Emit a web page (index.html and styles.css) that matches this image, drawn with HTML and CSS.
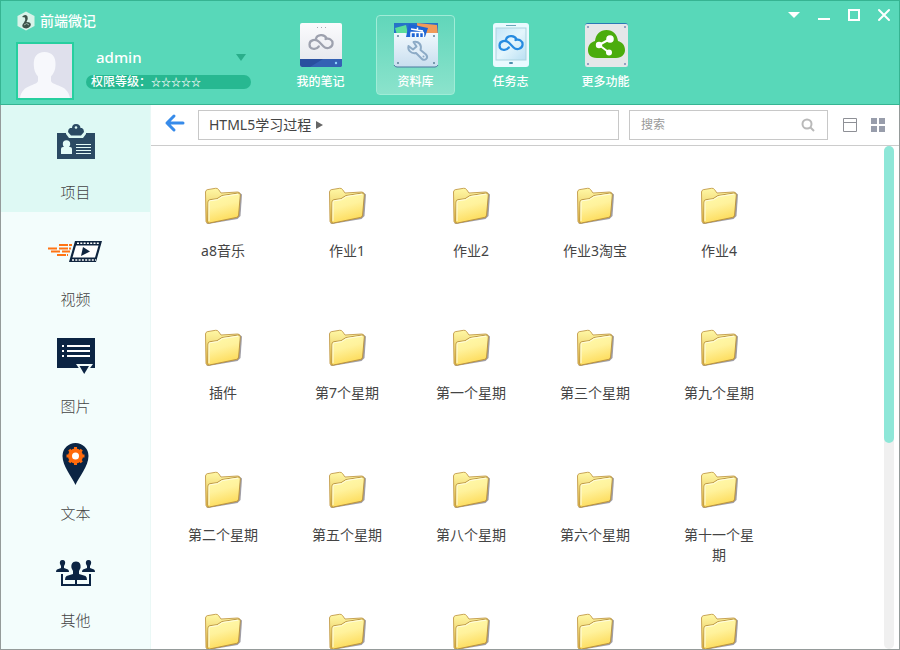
FILE: index.html
```html
<!DOCTYPE html>
<html lang="zh-CN">
<head>
<meta charset="utf-8">
<title>前端微记</title>
<link rel="stylesheet" href="styles.css">
</head>
<body>
<svg class="defs" aria-hidden="true">
  <defs>
    <linearGradient id="front" x1="0" y1="0" x2="0.3" y2="1">
      <stop offset="0" stop-color="#fffcae"/><stop offset="0.5" stop-color="#fff29c"/><stop offset="1" stop-color="#fddc5c"/>
    </linearGradient>
    <linearGradient id="back" x1="0" y1="0" x2="0" y2="1">
      <stop offset="0" stop-color="#fff8a6"/><stop offset="1" stop-color="#e2b53e"/>
    </linearGradient>
    <linearGradient id="steel" x1="0" y1="0" x2="0" y2="1">
      <stop offset="0" stop-color="#fbfbfd"/><stop offset="1" stop-color="#e4e6ec"/>
    </linearGradient>
    <linearGradient id="pocket" x1="0" y1="0" x2="0" y2="1">
      <stop offset="0" stop-color="#f0f8fd"/><stop offset="1" stop-color="#c9deef"/>
    </linearGradient>
    <linearGradient id="screen" x1="0" y1="0" x2="1" y2="1">
      <stop offset="0" stop-color="#c5e6f7"/><stop offset="0.5" stop-color="#e4f6fd"/><stop offset="1" stop-color="#b9dff3"/>
    </linearGradient>
    <symbol id="folder" viewBox="0 0 38 38">
      <path d="M36 6 38 7.500 36.500 29 33.500 32 4 37 2 36z" fill="#77757f" opacity=".7"/>
      <path d="M1.500 5Q1.700 3.200 3.200 2.700L11.500 1.300Q13.400 1 14.500 2.500L17 6 33.500 5Q36 5 35.800 7L34 30 3.500 36.300 2 34.500z" fill="url(#back)" stroke="#c29a48" stroke-width=".9"/>
      <path d="M4 14.800Q4 13.100 5.800 12.700L13 11.700 18 8.500 34 6Q36.500 5.800 36.300 8L34.600 28Q34.400 30 32.500 30.400L5.500 36Q3.700 36.300 3.700 34.500z" fill="url(#front)" stroke="#b58f40" stroke-width=".9"/>
      <path d="M5 34V15.500Q5 14 6.500 13.700L13.500 12.700 18.500 9.500 34 7.200" fill="none" stroke="#fffde0" stroke-width="1"/>
    </symbol>
    <symbol id="cloud" viewBox="0 0 26 18">
      <path d="M8 5.500C9 1.800 16 .2 18.500 5.200M17.500 6C21 4.500 24.600 7 24.600 10.200C24.600 15 18.600 16.500 15.600 13.400L11 8.800C7.800 5.500 1.500 6.800 1.500 11.400C1.500 16.200 7.800 17.500 10.800 13.500" fill="none" stroke="currentColor" stroke-width="2.200" stroke-linecap="round"/>
    </symbol>
  </defs>
</svg>
<div class="app">
  <header class="top">
    <div class="account">
      <h1 class="brand">
        <svg width="20" height="20" viewBox="0 0 20 20" aria-hidden="true">
          <path d="M10 .5 18.500 5V15L10 19.500 1.500 15V5z" fill="#d9f3e9"/>
          <path d="M6 6Q9 2.500 11.500 5.500Q12.500 8 10.500 11Q16 11 14.500 15Q12 18.500 8 17Q4.500 15 8 11.500Q10 8.500 9 6.500z" fill="#3d5349"/>
          <path d="M8 14Q11 11 13 14" fill="none" stroke="#9fb8aa"/>
        </svg>
        <span>前端微记</span>
      </h1>
      <div class="profile">
        <svg class="avatar" viewBox="0 0 54 54" role="img" aria-label="头像">
          <rect width="54" height="54" fill="#dfe0ec"/>
          <path d="M26.500 8C34 8 38 13 37.500 21C37.400 26 36 29 33 32.500V37C34 42 50 40 52 54H2C4 40 19 42 20 37V32.500C17 29 16 26 15.800 21C15.500 13 19 8 26.500 8z" fill="#f7f8fc"/>
        </svg>
        <div class="who">
          <button class="user" type="button"><span>admin</span><svg width="10" height="7" viewBox="0 0 10 7" aria-hidden="true"><path d="M0 0H10L5 7z" fill="#2aae8b"/></svg></button>
          <p class="level"><span>权限等级：</span><span class="stars">☆☆☆☆☆</span></p>
        </div>
      </div>
    </div>
    <nav class="tabs">
      <a class="tab" href="#notes">
        <svg width="46" height="46" viewBox="0 0 46 46" aria-hidden="true">
          <rect x="2" y="1" width="42" height="44" rx="2" fill="url(#steel)"/>
          <path d="M2 37H44V43Q44 45 42 45H4Q2 45 2 43z" fill="#294f9f"/><path d="M12 45 25 37H44V43Q44 45 42 45z" fill="#3461b4"/>
          <circle cx="38" cy="41" r="1.200" fill="#8ed5ff"/>
          <path d="M19 5.500H20M23 5.500H24M27 5.500H28" stroke="#a6a8b2" stroke-width="1"/>
          <use href="#cloud" x="10" y="11" width="26" height="18" color="#9da1ae"/>
        </svg>
        <span>我的笔记</span>
      </a>
      <a class="tab current" href="#library" aria-current="page">
        <svg width="46" height="46" viewBox="0 0 46 46" aria-hidden="true">
          <path d="M1 1H45V16H1z" fill="#2673c8"/>
          <path d="M2 6 13 3 15 12 5 16z" fill="#5bdd9c"/><path d="M24 1 44 3 45 14H25z" fill="#f19b58"/>
          <path d="M1 11H12Q15 11 16 14H30Q31 11 34 11H45V42Q45 45 42 45H4Q1 45 1 42z" fill="url(#pocket)"/>
          <path d="M16 2 35 6 32 15H13z" fill="#1d65d5"/>
          <path d="M18 7 30 9M24.500 5.500V8M18 11V15M22.500 11V15M26.500 11V15M30.500 11V15M17.500 10.500H31" stroke="#fff" stroke-width="1.500" fill="none"/>
          <path d="M1 43Q2 45 4 45H42Q44 45 45 43" stroke="#4b789f" fill="none"/>
          <g fill="#5b8097"><circle cx="5" cy="14" r="1"/><circle cx="41" cy="14" r="1"/><circle cx="5" cy="41" r="1"/><circle cx="41" cy="41" r="1"/></g>
          <path d="M20.500 20C26 19 29 23 27.500 28L33 32.500C36 36 31.500 40 28.500 36.500L23 31C18 32 14.500 28 15.500 24L20 27.500 23.500 24.500z" fill="#e1eef8" stroke="#8caac6" stroke-width="2" stroke-linejoin="round"/>
          <circle cx="30.500" cy="34.500" r="1" fill="#8caac6"/>
        </svg>
        <span>资料库</span>
      </a>
      <a class="tab" href="#tasks">
        <svg width="46" height="46" viewBox="0 0 46 46" aria-hidden="true">
          <rect x="5" y="1" width="36" height="44" rx="3" fill="#eafaff"/>
          <rect x="8" y="6" width="30" height="32" fill="url(#screen)" stroke="#abd3df"/>
          <path d="M18 3.500H28" stroke="#6ba6ba"/><rect x="21" y="40" width="4" height="2" rx="1" fill="#4c8fac"/>
          <use href="#cloud" x="10" y="12" width="26" height="18" color="#268be0"/>
        </svg>
        <span>任务志</span>
      </a>
      <a class="tab" href="#more">
        <svg width="46" height="46" viewBox="0 0 46 46" aria-hidden="true">
          <rect x="2" y="1" width="43" height="44" rx="3" fill="#2b78b6"/><rect x="2" y="2" width="43" height="43" rx="2" fill="#e5e7e9"/>
          <g fill="#7888b5"><circle cx="5" cy="5" r="1"/><circle cx="42" cy="5" r="1"/><circle cx="5" cy="42" r="1"/><circle cx="42" cy="42" r="1"/></g>
          <path d="M14 36C7 36 5 32 5 28C5 23 8 20 12 19C13 12 17 8 23.500 8C30 8 34 12 35 19C39 20 42 23 42 28C42 32 39 36 33 36z" fill="#4bac0d"/>
          <path d="M27 17 16 23 26 30.500" fill="none" stroke="#fff" stroke-width="2"/>
          <g fill="#fff"><circle cx="27" cy="17" r="3.800"/><circle cx="16" cy="23" r="3.200"/><circle cx="26" cy="30.500" r="3"/></g>
        </svg>
        <span>更多功能</span>
      </a>
    </nav>
    <div class="window-buttons">
      <button type="button" aria-label="菜单"><svg viewBox="0 0 14 14"><path d="M1 4H13L7 10z" fill="#fff"/></svg></button>
      <button type="button" aria-label="最小化"><svg viewBox="0 0 14 14"><path d="M1 11H13" stroke="#fff" stroke-width="2"/></svg></button>
      <button type="button" aria-label="最大化"><svg viewBox="0 0 14 14"><path d="M2 2H12V12H2z" fill="none" stroke="#fff" stroke-width="2"/></svg></button>
      <button type="button" aria-label="关闭"><svg viewBox="0 0 14 14"><path d="M2 2 12 12M12 2 2 12" stroke="#fff" stroke-width="2" stroke-linecap="round"/></svg></button>
    </div>
  </header>
  <div class="content">
    <nav class="side">
      <a class="kind current" href="#project" aria-current="page">
        <svg viewBox="0 0 56 44" aria-hidden="true">
          <path d="M9 12H47V38H9z" fill="#2b4a63"/>
          <path d="M18 11H38V13L35 17H21L18 13z" fill="#def9f4"/>
          <path d="M28 3C31 3 32.500 5 32.500 7H34Q36 8 36 11L33 14.500H23L20 11Q20 8 22 7H24C24 5 25 3 28 3z" fill="#2b4a63"/>
          <circle cx="28" cy="6.500" r="1.300" fill="#def9f4"/>
          <circle cx="18.500" cy="23" r="3.700" fill="#e4fbf7"/><path d="M13 33V28Q13 26 15 26H22Q24 26 24 28V33z" fill="#e4fbf7"/>
          <path d="M28 23.500H43M28 26.500H43M28 29.500H43M28 32.500H43" stroke="#e4fbf7"/>
        </svg>
        <span>项目</span>
      </a>
      <a class="kind" href="#video">
        <svg viewBox="0 0 56 44" aria-hidden="true">
          <path d="M27 13H54L48 34H21z" fill="#10253f"/>
          <path d="M28 17.500H50.500L47 29.500H24.500z" fill="#fff"/>
          <path d="M29 15.300H52M24 32H48" stroke="#fff" stroke-width="1.500" stroke-dasharray="2 1.300"/>
          <path d="M35 19 42 23.500 33 28z" fill="#10253f"/>
          <path d="M11 17H24M0 20.500H9M11 20.500H23M3 23.500H12M14 23.500H22M9 27H20" stroke="#ff7414" stroke-width="2" stroke-dasharray="9 1"/>
        </svg>
        <span>视频</span>
      </a>
      <a class="kind" href="#picture">
        <svg viewBox="0 0 56 44" aria-hidden="true">
          <path d="M9 3H47V33H9z" fill="#0b2443"/>
          <path d="M14 11H16M14 16H16M14 21H16M19 11H42M19 16H42M19 21H42" stroke="#fff" stroke-width="2"/>
          <path d="M28 29H45L37 40H35.500z" fill="#f3fdfc"/><path d="M31.500 31H41L36.200 39z" fill="#0b2443"/>
        </svg>
        <span>图片</span>
      </a>
      <a class="kind" href="#text">
        <svg viewBox="0 0 56 44" aria-hidden="true">
          <path d="M27.500 43C24 35 14.500 24 14.500 14A13 13 0 0 1 40.500 14C40.500 24 31 35 27.500 43z" fill="#0b2443"/>
          <circle cx="27.500" cy="14" r="7.500" fill="#ff6a0c"/>
          <path d="M27.500 5V23M18.500 14H36.500M21.200 7.700 33.800 20.300M33.800 7.700 21.200 20.300" stroke="#ff6a0c" stroke-width="3"/>
          <circle cx="27.500" cy="14" r="3.500" fill="#fff"/>
        </svg>
        <span>文本</span>
      </a>
      <a class="kind" href="#other">
        <svg viewBox="0 0 56 44" aria-hidden="true">
          <g fill="#0b2443">
            <path d="M14.500 11C17 11 17.500 13 17 15L16 17V19L20 20.500Q21 21 21 23H8Q8 21 9 20.500L13 19V17L12 15C11.500 13 12 11 14.500 11z"/>
            <path d="M40.500 11C43 11 43.500 13 43 15L42 17V19L46 20.500Q47 21 47 23H34Q34 21 35 20.500L39 19V17L38 15C37.500 13 38 11 40.500 11z"/>
            <path d="M28 12.500C32 12.500 33 15.500 32.500 19L31 22V25L37.500 27Q39 28 39 31H17Q17 28 18.500 27L25 25V22L23.500 19C23 15.500 24 12.500 28 12.500z"/>
          </g>
          <path d="M14 25V36H42V25M28 30V36" fill="none" stroke="#0b2443" stroke-width="2"/>
        </svg>
        <span>其他</span>
      </a>
    </nav>
    <main class="browser">
      <div class="toolbar">
        <button class="back" type="button" aria-label="返回"><svg width="22" height="20" viewBox="0 0 22 20"><path d="M19 10H3M10 3 3 10 10 17" fill="none" stroke="#378bea" stroke-width="3" stroke-linecap="round" stroke-linejoin="round"/></svg></button>
        <div class="path"><a href="#html5">HTML5学习过程</a><svg width="7" height="10" viewBox="0 0 7 10" aria-hidden="true"><path d="M0 1 7 5 0 9z" fill="#666"/></svg></div>
        <div class="search">
          <input type="text" placeholder="搜索" aria-label="搜索">
          <button type="button" aria-label="开始搜索"><svg width="14" height="14" viewBox="0 0 14 14"><circle cx="6" cy="6" r="4.500" fill="none" stroke="#b9b9b9" stroke-width="2"/><path d="M9.500 9.500 13 13" stroke="#b9b9b9" stroke-width="2"/></svg></button>
        </div>
        <div class="views">
          <button type="button" aria-label="列表视图"><svg width="14" height="14" viewBox="0 0 14 14"><path d="M.5 .5H13.500V13.500H.5zM.5 4.500H13.500" fill="none" stroke="#8e9096"/></svg></button>
          <button type="button" aria-label="图标视图"><svg width="14" height="14" viewBox="0 0 14 14"><path d="M0 0H6V6H0zM8 0H14V6H8zM0 8H6V14H0zM8 8H14V14H8z" fill="#989dab"/></svg></button>
        </div>
      </div>
      <div class="files">
        <ul class="grid">
          <li><a href="#"><svg><use href="#folder"/></svg><span>a8音乐</span></a></li>
          <li><a href="#"><svg><use href="#folder"/></svg><span>作业1</span></a></li>
          <li><a href="#"><svg><use href="#folder"/></svg><span>作业2</span></a></li>
          <li><a href="#"><svg><use href="#folder"/></svg><span>作业3淘宝</span></a></li>
          <li><a href="#"><svg><use href="#folder"/></svg><span>作业4</span></a></li>
          <li><a href="#"><svg><use href="#folder"/></svg><span>插件</span></a></li>
          <li><a href="#"><svg><use href="#folder"/></svg><span>第7个星期</span></a></li>
          <li><a href="#"><svg><use href="#folder"/></svg><span>第一个星期</span></a></li>
          <li><a href="#"><svg><use href="#folder"/></svg><span>第三个星期</span></a></li>
          <li><a href="#"><svg><use href="#folder"/></svg><span>第九个星期</span></a></li>
          <li><a href="#"><svg><use href="#folder"/></svg><span>第二个星期</span></a></li>
          <li><a href="#"><svg><use href="#folder"/></svg><span>第五个星期</span></a></li>
          <li><a href="#"><svg><use href="#folder"/></svg><span>第八个星期</span></a></li>
          <li><a href="#"><svg><use href="#folder"/></svg><span>第六个星期</span></a></li>
          <li><a href="#"><svg><use href="#folder"/></svg><span>第十一个星期</span></a></li>
          <li><a href="#" aria-label="文件夹"><svg><use href="#folder"/></svg></a></li>
          <li><a href="#" aria-label="文件夹"><svg><use href="#folder"/></svg></a></li>
          <li><a href="#" aria-label="文件夹"><svg><use href="#folder"/></svg></a></li>
          <li><a href="#" aria-label="文件夹"><svg><use href="#folder"/></svg></a></li>
          <li><a href="#" aria-label="文件夹"><svg><use href="#folder"/></svg></a></li>
        </ul>
        <div class="track"><div class="thumb"></div></div>
      </div>
    </main>
  </div>
</div>
</body>
</html>
```

FILE: styles.css
```css
* { box-sizing: border-box; }
body, h1, p, ul { margin: 0; padding: 0; }
body {
  font-family: "Noto Sans", "Noto Sans CJK SC", sans-serif;
  font-size: 14px;
  line-height: 20px;
  color: #444;
  background: #fff;
}
ul { list-style: none; }
a { color: inherit; text-decoration: none; }
button {
  padding: 0;
  border: 0;
  background: none;
  font: inherit;
  color: inherit;
  cursor: pointer;
}
svg { display: block; flex: none; }
.defs { position: absolute; width: 0; height: 0; }

.app { display: flex; flex-direction: column; height: 100vh; }

/* Header */
.top {
  display: flex;
  align-items: flex-start;
  flex: none;
  background: #58d8b9;
  border: 1px solid #36b492;
  color: #fff;
}
.account { width: 250px; margin-right: 30px; padding: 10px 0 4px 15px; }
.brand {
  display: flex;
  align-items: center;
  gap: 4px;
  font-size: 14px;
  font-weight: 500;
  line-height: 20px;
}
.profile { display: flex; gap: 12px; margin-top: 11px; }
.avatar { width: 58px; height: 58px; border: 2px solid #27cf9f; }
.who { flex: 1; }
.user {
  display: flex;
  align-items: center;
  justify-content: space-between;
  width: 100%;
  padding: 0 5px 0 10px;
  font-size: 15px;
  font-weight: 500;
  line-height: 30px;
}
.level {
  display: flex;
  align-items: center;
  margin-top: 3px;
  padding-left: 5px;
  border-radius: 7px;
  background: #27b891;
  font-size: 12px;
  font-weight: 500;
  line-height: 14px;
}
.stars { font-size: 10px; font-weight: 700; }
.tabs { display: flex; gap: 16px; padding-top: 14px; }
.tab {
  display: flex;
  flex-direction: column;
  align-items: center;
  gap: 4px;
  width: 79px;
  padding: 6px 0 2px;
  border: 1px solid transparent;
  border-radius: 4px;
  font-size: 12px;
  font-weight: 500;
}
.tab svg { width: 46px; height: 46px; }
.tab.current {
  border-color: #a0ecd7;
  background: linear-gradient(#61d6ba, #8be3cc);
}
.window-buttons { display: flex; gap: 16px; margin-left: auto; padding: 7px 8px; }
.window-buttons svg { width: 14px; height: 14px; }

/* Body */
.content {
  display: flex;
  flex: 1;
  min-height: 0;
  border: 1px solid #959b9a;
  border-top: 0;
}
.side {
  flex: none;
  width: 150px;
  overflow: hidden;
  background: #f3fdfc;
  border-right: 1px solid #eaf8f6;
}
.kind {
  display: flex;
  flex-direction: column;
  align-items: center;
  gap: 17px;
  padding: 16px 0 10px;
  font-size: 15px;
  font-weight: 300;
}
.kind svg { width: 56px; height: 44px; }
.kind.current { background: #def9f4; }

.browser { display: flex; flex-direction: column; flex: 1; min-width: 0; }
.toolbar {
  display: flex;
  align-items: center;
  gap: 10px;
  padding: 5px 14px 5px 13px;
  border-bottom: 1px solid #ccc;
}
.back { margin-bottom: 4px; }
.path {
  display: flex;
  align-items: center;
  gap: 5px;
  flex: 1;
  height: 30px;
  margin-left: 2px;
  padding-left: 10px;
  border: 1px solid #c8c8c8;
}
.search {
  display: flex;
  align-items: center;
  width: 199px;
  height: 30px;
  padding: 0 12px 0 11px;
  border: 1px solid #c8c8c8;
}
.search input {
  flex: 1;
  min-width: 0;
  padding: 0;
  border: 0;
  outline: 0;
  background: none;
  font: inherit;
  font-size: 12px;
}
.search input::placeholder { color: #999; }
.views { display: flex; gap: 14px; padding-left: 5px; }

.files { display: flex; flex: 1; min-height: 0; padding-right: 5px; }
.grid {
  display: grid;
  grid-template-columns: repeat(auto-fill, 124px);
  grid-auto-rows: 142px;
  align-content: start;
  flex: 1;
  padding: 41px 90px 0 10px;
  overflow: hidden;
}
.grid a {
  display: flex;
  flex-direction: column;
  align-items: center;
  gap: 16px;
  text-align: center;
}
.grid svg { width: 38px; height: 38px; }
.grid span { width: 80px; }
.track { width: 10px; border-radius: 5px; background: #f0f0f0; }
.thumb { height: 59%; border-radius: 5px; background: #8ee7d8; }
```
